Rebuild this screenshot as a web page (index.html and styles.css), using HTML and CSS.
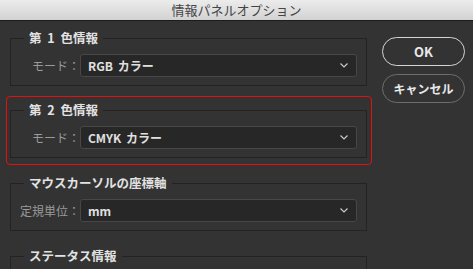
FILE: index.html
```html
<!DOCTYPE html>
<html lang="ja">
<head>
    <meta charset="UTF-8">
    <title>情報パネルオプション</title>
    <link rel="stylesheet" href="styles.css">
</head>
<body>
    <div class="titlebar">情報パネルオプション</div>

    <div class="dialog">
        <div class="options">
            <fieldset class="group first">
                <legend>第 1 色情報</legend>
                <div class="row">
                    <label>モード：</label>
                    <div class="select">RGB カラー
                        <svg class="chevron" width="8" height="5" viewBox="0 0 8 5"><polyline points="0.5,0.5 4,4 7.5,0.5" fill="none" stroke="#c8c8c8" stroke-width="1.2"/></svg>
                    </div>
                </div>
            </fieldset>

            <div class="highlight">
                <fieldset class="group">
                    <legend>第 2 色情報</legend>
                    <div class="row">
                        <label>モード：</label>
                        <div class="select">CMYK カラー
                            <svg class="chevron" width="8" height="5" viewBox="0 0 8 5"><polyline points="0.5,0.5 4,4 7.5,0.5" fill="none" stroke="#c8c8c8" stroke-width="1.2"/></svg>
                        </div>
                    </div>
                </fieldset>
            </div>

            <fieldset class="group third">
                <legend>マウスカーソルの座標軸</legend>
                <div class="row">
                    <label>定規単位：</label>
                    <div class="select">mm
                        <svg class="chevron" width="8" height="5" viewBox="0 0 8 5"><polyline points="0.5,0.5 4,4 7.5,0.5" fill="none" stroke="#c8c8c8" stroke-width="1.2"/></svg>
                    </div>
                </div>
            </fieldset>

            <fieldset class="group fourth">
                <legend>ステータス情報</legend>
            </fieldset>
        </div>

        <div class="buttons">
            <button class="btn default">OK</button>
            <button class="btn">キャンセル</button>
        </div>
    </div>
</body>
</html>
```

FILE: styles.css
```css
/* General */
html, body {
    margin: 0;
    padding: 0;
    height: 100%;
    overflow: hidden;
}
body {
    background-color: #333333;
    font-family: "Noto Sans CJK JP", sans-serif;
    font-size: 12px;
    color: #dcdcdc;
}

/* Title bar */
.titlebar {
    height: 20px;
    line-height: 20px;
    text-align: center;
    font-size: 13px;
    color: #454545;
    background: linear-gradient(#ececec, #d2d2d2);
    border-bottom: 1px solid #1c1c1c;
}

/* Layout */
.dialog {
    display: flex;
    align-items: flex-start;
    padding: 0 8px 0 10px;
}
.options {
    width: 357px;
    flex-shrink: 0;
}
.buttons {
    display: flex;
    flex-direction: column;
    gap: 8px;
    margin-left: 15px;
    margin-top: 16px;
}

/* Groups */
.group {
    margin: 0;
    border: 1px solid #232323;
    padding: 9px 9px 8px 9px;
    min-width: 0;
}
.group legend {
    margin-left: 4px;
    padding: 0 5px;
    font-size: 12.5px;
    font-weight: bold;
    line-height: 14px;
    word-spacing: 3px;
    white-space: nowrap;
    color: #e2e2e2;
}
.first {
    margin-top: 10px;
}
.third {
    margin-top: 11px;
}
.fourth {
    margin-top: 18px;
    height: 40px;
}

.highlight {
    margin: 10px -5px 0 -4px;
    padding: 6px 4px 6px 3px;
    border: 1px solid #e31010;
    border-radius: 4px;
}

/* Rows */
.row {
    display: flex;
    align-items: center;
}
.row label {
    width: 60px;
    text-align: right;
    white-space: nowrap;
    color: #9a9a9a;
    flex-shrink: 0;
}
.select {
    flex: 1;
    height: 21px;
    line-height: 21px;
    display: flex;
    align-items: center;
    justify-content: space-between;
    padding: 0 8px 0 7px;
    background-color: #272727;
    border: 1px solid #474747;
    border-radius: 3px;
    font-weight: bold;
    word-spacing: 2px;
    color: #e0e0e0;
}

/* Buttons */
.btn {
    width: 83px;
    height: 29px;
    border-radius: 15px;
    border: 1px solid #6e6e6e;
    background-color: #333333;
    color: #e8e8e8;
    font-family: "Noto Sans CJK JP", sans-serif;
    font-size: 12px;
    font-weight: bold;
    padding: 0;
}
.btn.default {
    border: 1.5px solid #d4d4d4;
    font-size: 13px;
}
```
